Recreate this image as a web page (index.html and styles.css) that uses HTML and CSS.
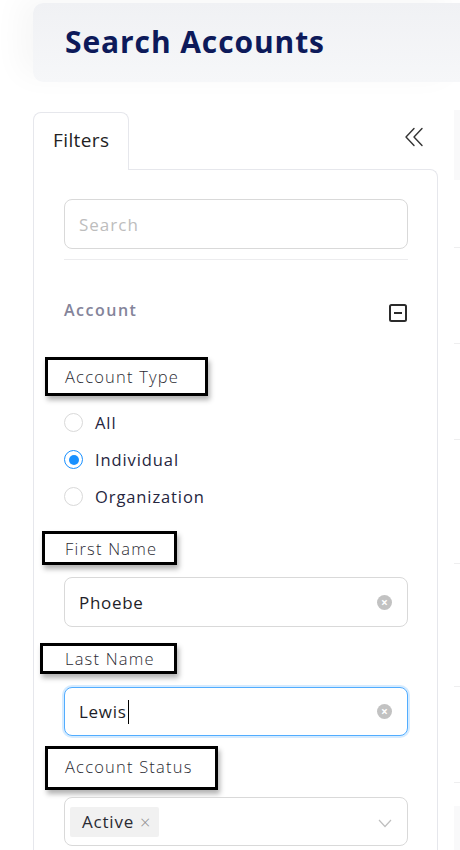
FILE: index.html
```html
<!DOCTYPE html>
<html lang="en">
<head>
<meta charset="utf-8">
<title>Search Accounts</title>
<link rel="stylesheet" href="styles.css">
</head>
<body>
<header class="page-header">
  <h1 class="page-title">Search Accounts</h1>
</header>

<div class="main">
  <aside class="filters">
    <div class="tabs">
      <div class="tab">Filters</div>
      <button class="collapse" aria-label="Collapse">
        <svg width="20" height="20" viewBox="0 0 20 20" fill="none" stroke="#333" stroke-width="1.4" stroke-linecap="round" stroke-linejoin="round">
          <polyline points="10,1.5 2,10 10,18.5"/>
          <polyline points="18,1.5 10,10 18,18.5"/>
        </svg>
      </button>
    </div>

    <div class="panel">
      <div class="input search-input"><span class="placeholder">Search</span></div>
      <div class="divider"></div>

      <div class="section-row">
        <span class="section-title">Account</span>
        <svg class="minus" width="18" height="18" viewBox="0 0 18 18" fill="none" stroke="#2b2b2b" stroke-width="2">
          <rect x="1" y="1" width="16" height="16" rx="1.5"/>
          <line x1="5" y1="9" x2="13" y2="9"/>
        </svg>
      </div>

      <div class="note note-type">Account Type</div>
      <div class="radios">
        <label class="radio"><span class="dot"></span><span class="radio-label">All</span></label>
        <label class="radio"><span class="dot dot-on"></span><span class="radio-label">Individual</span></label>
        <label class="radio"><span class="dot"></span><span class="radio-label">Organization</span></label>
      </div>

      <div class="note note-first">First Name</div>
      <div class="input field field-first">
        <span class="value">Phoebe</span>
        <span class="clear">&#215;</span>
      </div>

      <div class="note note-last">Last Name</div>
      <div class="input field field-last focused">
        <span class="value">Lewis<span class="caret"></span></span>
        <span class="clear">&#215;</span>
      </div>

      <div class="note note-status">Account Status</div>
      <div class="input field field-select">
        <span class="tag">Active <span class="tag-x">&#215;</span></span>
        <svg class="chev" width="14" height="9" viewBox="0 0 14 9" fill="none" stroke="#bfbfbf" stroke-width="1.2">
          <polyline points="1,1 7,7.5 13,1"/>
        </svg>
      </div>
    </div>
  </aside>

  <section class="results">
    <div class="results-head"></div>
    <div class="row r1"></div>
    <div class="row r2"></div>
    <div class="row r3"></div>
    <div class="row r4"></div>
    <div class="row r5"></div>
    <div class="row r6"></div>
    <div class="results-foot"></div>
  </section>
</div>
</body>
</html>
```

FILE: styles.css
```css
* { box-sizing: border-box; }

html, body {
  margin: 0;
  padding: 0;
  background: #ffffff;
  overflow: hidden;
}

body {
  font-family: "Open Sans", "Noto Sans", sans-serif;
  color: #2a2a3a;
  width: 460px;
  height: 850px;
  position: relative;
}

.page-header {
  margin: 3px 0 0 33px;
  height: 79px;
  border-radius: 10px 0 0 10px;
  background: linear-gradient(180deg, #f0f1f4 0%, #f6f7f9 100%);
  display: flex;
  align-items: center;
  padding-left: 32px;
  box-shadow: -14px -6px 30px rgba(0, 0, 0, 0.035);
}

.page-title {
  margin: 0;
  font-size: 30px;
  font-weight: 700;
  letter-spacing: 0.9px;
  color: #0d1a5a;
  line-height: 1;
  padding-bottom: 2px;
}

.main {
  display: flex;
  margin-top: 28px;
  align-items: flex-start;
}

.filters {
  width: 405px;
  margin-left: 33px;
  margin-top: 2px;
  flex: none;
}

.tabs {
  display: flex;
  justify-content: space-between;
  align-items: flex-start;
  height: 57px;
}

.tab {
  width: 96px;
  height: 58px;
  border: 1px solid #e6e7ec;
  border-bottom: none;
  border-radius: 8px 8px 0 0;
  background: #fff;
  font-size: 19px;
  letter-spacing: 0.4px;
  color: #222;
  padding: 14px 0 0 19px;
  position: relative;
  z-index: 1;
}

.collapse {
  border: none;
  background: none;
  padding: 0;
  margin: 15px 14px 0 0;
  width: 20px;
  height: 20px;
  display: block;
}
.collapse svg { display: block; }

.panel {
  border: 1px solid #e6e7ec;
  border-bottom: none;
  border-radius: 0 8px 0 0;
  padding: 29px 29px 0 30px;
  height: 700px;
  display: flex;
  flex-direction: column;
  align-items: flex-start;
}

.input {
  width: 344px;
  height: 50px;
  border: 1px solid #d9d9d9;
  border-radius: 8px;
  background: #fff;
  display: flex;
  align-items: center;
  padding: 0 14px;
  flex: none;
}

.placeholder {
  color: #bdbdbd;
  font-size: 17px;
  letter-spacing: 1px;
}

.divider {
  width: 344px;
  height: 1px;
  background: #ececee;
  margin-top: 10px;
  flex: none;
}

.section-row {
  width: 344px;
  height: 24px;
  margin-top: 39px;
  display: flex;
  justify-content: space-between;
  align-items: flex-start;
  flex: none;
}

.section-title {
  font-size: 16px;
  font-weight: 600;
  color: #84849a;
  line-height: 22px;
  letter-spacing: 1.5px;
}

.minus {
  margin-top: 5px;
  margin-right: 1px;
  display: block;
}

/* annotation boxes drawn around field labels */
.note {
  border: 3px solid #000;
  box-shadow: 2px 4px 5px rgba(0, 0, 0, 0.3);
  display: flex;
  align-items: center;
  font-size: 16.5px;
  font-weight: 300;
  letter-spacing: 1.2px;
  color: #2b2b33;
  flex: none;
  white-space: nowrap;
}

.note-type {
  width: 163px;
  height: 39px;
  margin-top: 34px;
  margin-left: -19px;
  padding-left: 17px;
}

.note-first {
  width: 135px;
  height: 34px;
  margin-top: 16px;
  margin-left: -22px;
  padding-left: 20px;
}

.note-last {
  width: 137px;
  height: 31px;
  margin-top: 16px;
  margin-left: -24px;
  padding-left: 22px;
}

.note-status {
  width: 173px;
  height: 44px;
  margin-top: 10px;
  margin-left: -19px;
  padding-left: 17px;
  padding-bottom: 4px;
}

.radios {
  margin-top: 8px;
  display: flex;
  flex-direction: column;
  flex: none;
}

.radio {
  height: 37px;
  display: flex;
  align-items: center;
}

.dot {
  width: 19px;
  height: 19px;
  border-radius: 50%;
  border: 1px solid #d9d9d9;
  background: #fff;
  flex: none;
  position: relative;
}

.dot-on {
  border-color: #1890ff;
}
.dot-on::after {
  content: "";
  position: absolute;
  left: 3.5px;
  top: 3.5px;
  width: 10px;
  height: 10px;
  border-radius: 50%;
  background: #1890ff;
}

.radio-label {
  margin-left: 12px;
  font-size: 16.5px;
  letter-spacing: 0.9px;
  color: #262640;
}

.field {
  justify-content: space-between;
}

.field-first { margin-top: 12px; }
.field-last { margin-top: 13px; height: 49px; }
.field-select { margin-top: 7px; height: 49px; padding-left: 5px; padding-right: 15px; }

.focused {
  border-color: #52adff;
  box-shadow: 0 0 0 2px rgba(24, 144, 255, 0.18);
}

.value {
  font-size: 17px;
  letter-spacing: 0.7px;
  color: #1e1e28;
  display: flex;
  align-items: center;
}

.caret {
  display: inline-block;
  width: 1px;
  height: 24px;
  background: #000;
  margin-left: 1px;
}

.clear {
  width: 15px;
  height: 15px;
  border-radius: 50%;
  background: #c2c2c2;
  color: #fff;
  font-size: 12px;
  line-height: 15px;
  text-align: center;
  font-weight: 700;
  margin-right: 1px;
}

.tag {
  height: 30px;
  background: #f1f1f1;
  border-radius: 2px;
  padding: 0 8px 0 12px;
  display: flex;
  align-items: center;
  font-size: 17px;
  letter-spacing: 0.8px;
  color: #2a2a33;
}

.tag-x {
  color: #8c8c8c;
  font-size: 18px;
  font-weight: 300;
  margin-left: 6px;
}

.chev { display: block; margin-top: 4px; }

.results {
  flex: 1;
  margin-left: 16px;
  display: flex;
  flex-direction: column;
}

.results-head {
  height: 70px;
  background: #f9f9fa;
}

.row {
  border-bottom: 1px solid #eeeeef;
  flex: none;
}
.r1 { height: 68px; }
.r2 { height: 96px; }
.r3 { height: 96px; }
.r4 { height: 124px; }
.r5 { height: 123px; }
.r6 { height: 96px; }

.results-foot {
  margin-top: 23px;
  height: 60px;
  background: #f9f9fa;
}
```
